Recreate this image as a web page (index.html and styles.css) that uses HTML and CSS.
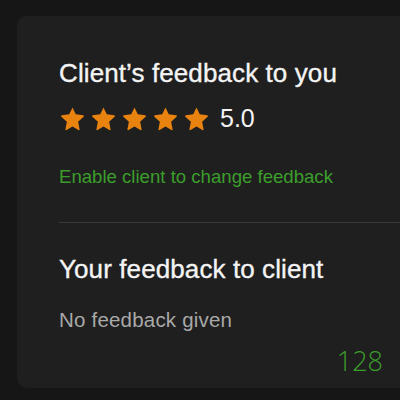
FILE: index.html
```html
<!DOCTYPE html>
<html lang="en">
<head>
  <meta charset="UTF-8">
  <meta name="viewport" content="width=device-width, initial-scale=1.0">
  <title>Feedback</title>
  <link rel="stylesheet" href="styles.css">
</head>
<body>

  <div class="card">
    <section class="block">
      <h2>Client’s feedback to you</h2>
      <div class="rating">
        <div class="stars">
          <svg viewBox="0 0 24 24"><path d="M12 2.2l2.9 6.1 6.6.8c.6.1.9.9.4 1.3l-4.9 4.5 1.3 6.6c.1.6-.5 1.1-1.1.8L12 19l-5.2 3.3c-.5.3-1.2-.2-1.1-.8L7 14.9 2.1 10.4c-.5-.4-.2-1.2.4-1.3l6.6-.8L12 2.2z"/></svg>
          <svg viewBox="0 0 24 24"><path d="M12 2.2l2.9 6.1 6.6.8c.6.1.9.9.4 1.3l-4.9 4.5 1.3 6.6c.1.6-.5 1.1-1.1.8L12 19l-5.2 3.3c-.5.3-1.2-.2-1.1-.8L7 14.9 2.1 10.4c-.5-.4-.2-1.2.4-1.3l6.6-.8L12 2.2z"/></svg>
          <svg viewBox="0 0 24 24"><path d="M12 2.2l2.9 6.1 6.6.8c.6.1.9.9.4 1.3l-4.9 4.5 1.3 6.6c.1.6-.5 1.1-1.1.8L12 19l-5.2 3.3c-.5.3-1.2-.2-1.1-.8L7 14.9 2.1 10.4c-.5-.4-.2-1.2.4-1.3l6.6-.8L12 2.2z"/></svg>
          <svg viewBox="0 0 24 24"><path d="M12 2.2l2.9 6.1 6.6.8c.6.1.9.9.4 1.3l-4.9 4.5 1.3 6.6c.1.6-.5 1.1-1.1.8L12 19l-5.2 3.3c-.5.3-1.2-.2-1.1-.8L7 14.9 2.1 10.4c-.5-.4-.2-1.2.4-1.3l6.6-.8L12 2.2z"/></svg>
          <svg viewBox="0 0 24 24"><path d="M12 2.2l2.9 6.1 6.6.8c.6.1.9.9.4 1.3l-4.9 4.5 1.3 6.6c.1.6-.5 1.1-1.1.8L12 19l-5.2 3.3c-.5.3-1.2-.2-1.1-.8L7 14.9 2.1 10.4c-.5-.4-.2-1.2.4-1.3l6.6-.8L12 2.2z"/></svg>
        </div>
        <span class="score">5.0</span>
      </div>
      <a class="enable" href="#">Enable client to change feedback</a>
    </section>

    <hr class="divider">

    <section class="block">
      <h2>Your feedback to client</h2>
      <p class="empty">No feedback given</p>
    </section>

    <div class="counter">128</div>
  </div>

</body>
</html>
```

FILE: styles.css
```css
html, body {
  margin: 0;
  height: 100%;
}

body {
  background-color: #161616;
  font-family: "Liberation Sans", Arial, sans-serif;
  color: #f4f4f4;
  overflow: hidden;
  padding: 16px 0 0 17px;
  box-sizing: border-box;
}

/* the panel runs on past the right edge of the window */
.card {
  width: 420px;
  height: 372px;
  background-color: #1f1f1f;
  border-radius: 10px;
  box-sizing: border-box;
  padding: 42px 0 0 42px;
  display: flex;
  flex-direction: column;
}

.block {
  display: flex;
  flex-direction: column;
}

h2 {
  margin: 0;
  font-size: 26px;
  line-height: 30px;
  font-weight: normal;
  letter-spacing: 0.1px;
  -webkit-text-stroke: 0.35px #f4f4f4;
}

.rating {
  display: flex;
  align-items: center;
  margin-top: 16px;
}

.stars {
  display: flex;
  gap: 4px;
}

.stars svg {
  width: 27px;
  height: 27px;
  fill: #e8830f;
}

.score {
  margin-left: 10px;
  font-size: 25px;
  line-height: 28px;
}

.enable {
  margin-top: 34px;
  font-size: 18.6px;
  line-height: 22px;
  color: #3b9e2b;
  text-decoration: none;
}

.divider {
  margin: 34px 0 0;
  border: none;
  height: 1px;
  background-color: #3a3a3a;
}

.block + .divider + .block {
  margin-top: 31px;
}

.empty {
  margin: 24px 0 0;
  font-size: 20.5px;
  line-height: 24px;
  letter-spacing: 0.2px;
  color: #a9a9a9;
}

.counter {
  align-self: flex-end;
  margin: 14px 54px 0 0;
  font-family: "Open Sans", sans-serif;
  font-weight: 300;
  font-size: 27px;
  line-height: 30px;
  color: #3b9e2b;
}
```
